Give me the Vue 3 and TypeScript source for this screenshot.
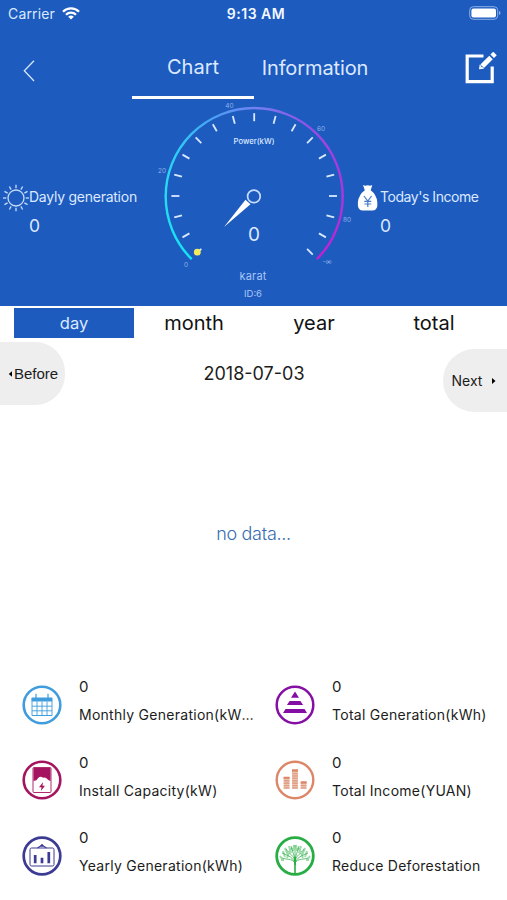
<script setup lang="ts">
import { ref } from 'vue'

interface Stat { kind: string; label: string; color: string; ring: number }

const periods: string[] = ['day', 'month', 'year', 'total']
const period = ref('day')

// Nineteen marks, 15 degrees apart, from -135 to +135
const ticks: number[] = Array.from({ length: 19 }, (_, i) => -135 + i * 15)
const rays: number[] = Array.from({ length: 12 }, (_, i) => i * 30)

const stats: Stat[] = [
  { kind: 'calendar', label: 'Monthly Generation(kWh)', color: '#3f9ddd', ring: 2.6 },
  { kind: 'pyramid', label: 'Total Generation(kWh)', color: '#850fa5', ring: 2.5 },
  { kind: 'battery', label: 'Install Capacity(kW)', color: '#a5145f', ring: 2.6 },
  { kind: 'coins', label: 'Total Income(YUAN)', color: '#dc8768', ring: 2.4 },
  { kind: 'board', label: 'Yearly Generation(kWh)', color: '#3c3b93', ring: 2.7 },
  { kind: 'tree', label: 'Reduce Deforestation', color: '#27ad43', ring: 2.8 },
]
</script>

<template>
  <main class="screen">
    <header class="hero">
      <div class="status">
        <span class="carrier">Carrier
          <svg width="18" height="13" viewBox="0 0 18 13" fill="none" stroke="#fff" stroke-width="2.3">
            <path d="M1 4.7a11.3 11.3 0 0 1 16 0M4 7.8a7 7 0 0 1 10 0" />
            <path d="M6.2 9.8a4 4 0 0 1 5.6 0L9 12.6z" fill="#fff" stroke="none" />
          </svg>
        </span>
        <span class="clock">9:13 AM</span>
        <svg class="power" width="32" height="14" viewBox="0 0 32 14">
          <rect x=".7" y=".7" width="28" height="12.6" rx="3.6" fill="none" stroke="#8eb0e6" stroke-width="1" />
          <rect x="2.4" y="2.4" width="24.6" height="9.2" rx="2" fill="#fff" />
          <path d="M30 5v4q1.5-.6 1.5-2T30 5z" fill="#8eb0e6" />
        </svg>
      </div>

      <nav class="nav">
        <svg class="back" width="13" height="22" viewBox="0 0 13 22" fill="none" stroke="#d6e6ff" stroke-width="1.3">
          <path d="M11 .8 1.300 10.800l9.700 10.200" />
        </svg>
        <span class="nav-tab chosen">Chart</span>
        <span class="nav-tab info">Information</span>
        <svg class="edit" width="32" height="32" viewBox="0 0 32 32" fill="none" stroke="#fff">
          <path d="M18.5 4H2.200v25.600h25V14.500" stroke-width="3.200" />
          <path d="M17.200 14.300 26 5.500" stroke-width="5" />
          <path d="M27.2 4.300 30 1.500" stroke-width="5" />
          <path d="m14.700 12.500-.7 4.800 5-.6z" fill="#fff" stroke="none" />
          <path d="m16 15.300 1.200-1.200" stroke="#1d5bbf" stroke-width="1" />
        </svg>
      </nav>

      <section class="dash">
        <div class="side left">
          <svg class="sun" width="26" height="28" viewBox="-13 -14 26 28" fill="none" stroke="#c9dcfa">
            <circle r="8" stroke-width="1.3" />
            <path v-for="r in rays" :key="r" d="M0-9.7V-13.3" stroke-width="1.3" :transform="`rotate(${r})`" />
          </svg>
          <div class="reading daily"><span>Dayly generation</span><b>0</b></div>
        </div>

        <div class="meter">
          <svg class="gauge" width="206" height="170" viewBox="150 99 206 170">
            <defs>
              <linearGradient id="arc" gradientUnits="userSpaceOnUse" x1="165" y1="0" x2="342" y2="0">
                <stop offset="0" stop-color="#28d9f5" />
                <stop offset=".25" stop-color="#46a5f4" />
                <stop offset=".52" stop-color="#737ff2" />
                <stop offset=".78" stop-color="#9055e8" />
                <stop offset="1" stop-color="#a838de" />
              </linearGradient>
              <linearGradient id="arc-start" gradientUnits="userSpaceOnUse" x1="0" y1="196" x2="0" y2="259">
                <stop offset="0" stop-color="#28d9f5" />
                <stop offset="1" stop-color="#14e4f2" />
              </linearGradient>
              <linearGradient id="arc-end" gradientUnits="userSpaceOnUse" x1="0" y1="196" x2="0" y2="259">
                <stop offset="0" stop-color="#a838de" />
                <stop offset="1" stop-color="#c21fd2" />
              </linearGradient>
            </defs>
            <g fill="none" stroke-width="2.4">
              <path d="M165.700 196.500A88.500 88.500 0 0 1 342.700 196.500" stroke="url(#arc)" />
              <path d="M165.700 196A88.500 88.500 0 0 0 191.700 259.200" stroke="url(#arc-start)" />
              <path d="M342.700 196A88.500 88.500 0 0 1 316.800 259.200" stroke="url(#arc-end)" />
            </g>
            <g stroke="#d9e9ff" stroke-width="1.8">
              <path v-for="t in ticks" :key="t" d="M0-82.800V-74.800" :transform="`translate(254.2 196) rotate(${t})`" />
            </g>
            <circle cx="197.300" cy="252.200" r="3.400" fill="#f3ec5a" />
            <path d="M224 227 245.500 199.700 250.500 204.300z" fill="#fff" />
            <circle cx="253.900" cy="196.400" r="6.300" fill="#1d5bbf" stroke="#c8dcff" stroke-width="1.700" />
            <g class="scale" fill="#8eb1ea">
              <text x="186" y="266.500">0</text>
              <text x="162" y="172.700">20</text>
              <text x="229.500" y="108">40</text>
              <text x="321" y="131.200">60</text>
              <text x="347" y="222">80</text>
              <text x="327" y="263.500">-∞</text>
            </g>
            <text class="unit" x="254" y="144" textLength="41" lengthAdjust="spacingAndGlyphs">Power(kW)</text>
            <text class="value" x="254" y="240.500">0</text>
          </svg>
          <span class="name">karat</span>
          <span class="ident">ID:6</span>
        </div>

        <div class="side right">
          <svg class="bag" width="22" height="28" viewBox="0 0 22 28">
            <path d="M6 1q2.500 1.200 4.800.2 2.400 1 4.500-.2l-1.600 5.200Q19.500 10.500 20.300 18q.8 8.600-4.500 8.600H5.400Q.2 26.600.9 18 1.800 10.500 7.800 6.200z" fill="#fff" />
            <path d="m7 12 3.800 5 3.800-5M10.800 17v6M7.300 17.300h7M7.300 20h7" fill="none" stroke="#477cca" stroke-width="1.200" />
          </svg>
          <div class="reading income"><span>Today's Income</span><b>0</b></div>
        </div>
      </section>
    </header>

    <div class="periods">
      <button v-for="p in periods" :key="p" :class="{ on: p === period }" @click="period = p">{{ p }}</button>
    </div>

    <div class="dates">
      <button class="before">
        <svg width="4" height="6" viewBox="0 0 4 6"><path d="M4 .3v5.400L.8 3z" /></svg><span>Before</span>
      </button>
      <span class="date">2018-07-03</span>
      <button class="next">
        <span>Next</span><svg width="4" height="6" viewBox="0 0 4 6"><path d="M0 0v6l3.500-3z" /></svg>
      </button>
    </div>

    <div class="empty"><span>no data...</span></div>

    <section class="stats">
      <article v-for="s in stats" :key="s.kind" class="stat">
        <svg class="badge" width="40" height="40" viewBox="-20 -20 40 40" fill="none" :stroke="s.color">
          <circle r="18.3" :stroke-width="s.ring" />
          <g v-if="s.kind === 'calendar'">
            <path d="M-10.300-7.500h20.400v4h-20.400z" :fill="s.color" stroke="none" />
            <path d="M-10-7v17.500h20V-7M-5-3.500v14M0-3.500v14M5-3.500v14M-10 1.200h20M-10 5.800h20M-10 10.500h20" stroke-width=".9" />
            <path d="M-6-11.200v5M6-11.200v5" stroke-width="1.2" />
          </g>
          <g v-else-if="s.kind === 'pyramid'" :fill="s.color" stroke="none">
            <path d="M0-13.500 4-7.200h-8zM-5.400-4h10.800l2.700 4H-8.100zM-9.500 4H9.500l2.500 4h-24z" />
          </g>
          <g v-else-if="s.kind === 'battery'">
            <rect x="-9" y="-12.500" width="18" height="25" rx="1" stroke-width=".9" />
            <path d="M-8.500-12h17v13Q6.500.500 5.500-.8 3.500-3.500 1-2.200-1.500-4.500-4-1.800-5 .8-8.500 1z" :fill="s.color" stroke="none" />
            <path d="M1.200 2-3 7.200h2.600L-1.200 11 3 5.800H.4z" :fill="s.color" stroke="none" />
          </g>
          <g v-else-if="s.kind === 'coins'">
            <path d="M-8.400 8.700V-1.800M0 8.700V-9.700M8.600 8.700V2.500" stroke-width="5.800" stroke-opacity=".5" />
            <path d="M-8.400 8.700V-2.500M0 8.700V-10M8.600 8.700V2" stroke-width="5.800" stroke-dasharray="1.400 1" stroke-opacity=".6" />
            <path d="M-11.500-2.300h6.200M-3-9.800h6M5.700 2.200h6" stroke-width="2" />
          </g>
          <g v-else-if="s.kind === 'board'">
            <rect x="-12" y="-8" width="24" height="18" rx="1.500" stroke-width="1" />
            <path d="M-4.500-8 0-10.800 4.500-8" stroke-width="1.200" />
            <circle cy="-10.500" r="1" stroke-width="1" />
            <path d="M-6.800-1v8.300M0 1.800v5.500M6.800-4v11.300" stroke-width="2.700" />
          </g>
          <g v-else>
            <path d="M0 18V1" stroke-width="1.600" />
            <path d="M0 9C0 2-8 4-13 2M0 9C0 1-9-1-13-3M0 6C0 0-7-3-9-7M0 5C0 0-3-5-4-10M0 6V-11M0 5C0 0 3-5 4-10M0 6C0 0 7-3 9-7M0 9C0 1 9-1 13-3M0 9C0 2 8 4 13 2" stroke-width=".9" stroke-opacity=".8" />
            <path d="M-13 3-15 0M-10 1-12-5M-7-1-10-8M-4-3-6-10M-2-5-1-11M2-5 1-11M4-3 6-10M7-1 10-8M10 1 12-5M13 3 15 0M-11 4-14 4M11 4h3M-6-4-3-8M6-4 3-8M-8 2-6-3M8 2 6-3" stroke-width="2" stroke-opacity=".45" />
          </g>
        </svg>
        <div class="figures">
          <b>0</b>
          <span class="label">{{ s.label }}</span>
        </div>
      </article>
    </section>
  </main>
</template>

<style>
body { margin: 0; background: #fff; }
</style>

<style scoped>
.screen { width: 507px; height: 900px; display: flex; flex-direction: column; overflow: hidden; background: #fff; color: #1c1c1c; font-family: Inter, "Liberation Sans", sans-serif; }
svg { display: block; flex: none; }
b { font-weight: 400; }
button { border: 0; margin: 0; padding: 0; background: none; color: inherit; font: inherit; }
.hero { height: 306px; flex: none; background: #1d5bbf; color: #dce9ff; display: flex; flex-direction: column; }
.status { height: 28px; display: grid; grid-template-columns: 1fr auto 1fr; align-items: center; padding: 0 6px 0 8px; box-sizing: border-box; font-size: 14px; white-space: nowrap; }
.carrier { display: flex; align-items: center; gap: 7px; letter-spacing: .15px; margin-top: -1px; }
.clock { font-weight: 600; color: #f3f8ff; font-size: 14px; padding-left: 3px; letter-spacing: .5px; margin-top: -1px; }
.power { justify-self: end; margin-top: -2px; }
.nav { height: 71px; display: grid; grid-template-columns: 132px 122px 122px 131px; box-sizing: border-box; padding-bottom: .5px; }
.back { margin: 31.500px 0 0 23px; }
.nav-tab { display: flex; align-items: center; justify-content: center; font-size: 20px; padding-top: 11px; white-space: nowrap; border-bottom: 3px solid transparent; box-sizing: border-box; }
.info { letter-spacing: -.1px; padding-top: 13px; }
.chosen { border-color: #fff; }
.edit { margin: 24px 0 0 89px; }
.dash { flex: 1; display: grid; grid-template-columns: 150px 206px 151px; }
.side { display: flex; padding-top: 85px; }
.left { padding-left: 3px; }
.right { padding-left: 1px; gap: 1px; }
.reading { display: flex; flex-direction: column; font-size: 14px; line-height: 26px; white-space: nowrap; }
.reading b { font-size: 17.500px; line-height: 32px; letter-spacing: 0; }
.daily { letter-spacing: -.25px; }
.income { letter-spacing: -.45px; }
.meter { display: flex; flex-direction: column; align-items: center; }
.scale { font-size: 6.500px; text-anchor: middle; }
.unit { font-size: 7.500px; font-weight: 500; fill: #dce9ff; text-anchor: middle; }
.value { font-size: 19px; fill: #dce9ff; text-anchor: middle; }
.name { font-size: 11px; line-height: 14px; color: #a9c7f7; letter-spacing: .2px; }
.ident { font-size: 9.500px; line-height: 14px; margin-top: 4px; color: #a9c7f7; }
.periods { display: grid; grid-template-columns: repeat(4, 120px); height: 30px; flex: none; padding: 1.500px 0 0 14px; margin-top: .5px; font-size: 20px; }
.periods button { height: 30px; line-height: 30px; color: #111; }
.periods .on { background: #1d5bbf; color: #dce9ff; font-size: 16.500px; }
.dates { height: 75px; flex: none; display: grid; grid-template-columns: 65px 1fr 64px; align-items: start; padding-top: 4px; }
.before, .next { height: 63px; background: #eee; display: flex; align-items: center; font-size: 14px; }
.before { border-radius: 0 30px 30px 0; padding-left: 8px; gap: 2px; font-family: "Liberation Sans", sans-serif; font-size: 15px; }
.next { border-radius: 32px 0 0 32px; margin-top: 7px; padding-left: 8.500px; gap: 10px; }
.date { text-align: center; font-size: 18px; line-height: 63px; }
.empty { flex: 1; display: flex; justify-content: center; align-items: flex-start; padding-top: 106px; box-sizing: border-box; color: #376cb0; font-size: 18px; line-height: 22px; font-weight: 300; letter-spacing: -.3px; }
.stats { height: 223px; flex: none; display: grid; grid-template-columns: 253px 253px; grid-template-rows: repeat(3, 75.700px); }
.stat { display: flex; padding-left: 22px; gap: 17px; min-width: 0; }
.badge { margin-top: 7.500px; }
.figures { width: 176px; font-size: 14px; display: flex; flex-direction: column; }
.figures b { font-size: 15px; line-height: 20px; }
.label { margin-top: 8px; line-height: 20px; overflow: hidden; text-overflow: ellipsis; white-space: nowrap; letter-spacing: .27px; }
</style>
